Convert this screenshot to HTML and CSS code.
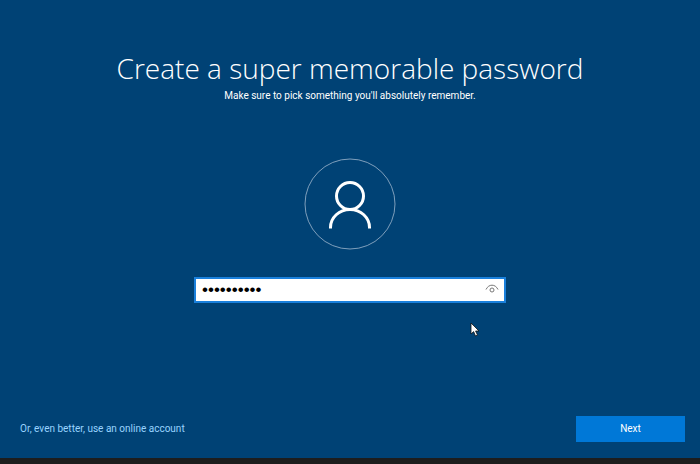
FILE: index.html
```
<!DOCTYPE html>
<html lang="en">
<head>
    <meta charset="UTF-8">
    <meta name="viewport" content="width=device-width, initial-scale=1.0">
    <title>Create a password</title>
    <link rel="stylesheet" href="styles.css">
</head>
<body>
    <form class="setup">
        <header class="heading">
            <h1>Create a super memorable password</h1>
            <p><label for="password">Make sure to pick something you'll absolutely remember.</label></p>
        </header>

        <main class="account">
            <div class="avatar">
                <svg viewBox="0 0 92 92" fill="none" stroke="#fff" aria-hidden="true">
                    <circle cx="46" cy="46" r="45" stroke="#7f9fbc"/>
                    <circle cx="46" cy="38" r="13.5" stroke-width="3"/>
                    <path d="M26.5 70.5v-1a19.5 18 0 0 1 39 0v1" stroke-width="3"/>
                </svg>
            </div>

            <div class="password-box">
                <input type="password" id="password" value="memorable1">
                <button type="button" class="reveal" aria-label="Show password">
                    <svg viewBox="0 0 14 12" fill="none" stroke="#777" aria-hidden="true">
                        <path d="M1 5.500C2.500 2.500 4.600 1.200 7 1.200s4.500 1.300 6 4.300"/>
                        <circle cx="7" cy="6" r="2"/>
                    </svg>
                </button>
            </div>
        </main>

        <footer class="actions">
            <a href="#online">Or, even better, use an online account</a>
            <button type="submit" class="next">Next</button>
        </footer>
    </form>

    <div class="taskbar"></div>

    <svg class="cursor" viewBox="0 0 10 15" aria-hidden="true">
        <path d="M1 1v11l2.600-2.400L5.500 14l2-.9-1.900-4.100H9z" fill="#fff" stroke="#111" stroke-width=".8"/>
    </svg>
</body>
</html>
```
FILE: styles.css
```
* {
    margin: 0;
    padding: 0;
    box-sizing: border-box;
}

body {
    display: flex;
    flex-direction: column;
    min-height: 100vh;
    font-family: Roboto, "Open Sans", sans-serif;
    font-size: 10px;
    line-height: 16px;
    background: #004275;
    color: #fff;
}

.setup {
    flex: 1;
    display: flex;
    flex-direction: column;
    padding: 48px 0 16px;
}

.heading {
    text-align: center;
}

.heading h1 {
    font-family: "Open Sans", "Noto Sans", sans-serif;
    font-size: 28px;
    font-weight: 300;
    line-height: 40px;
}

.account {
    display: flex;
    flex-direction: column;
    align-items: center;
    gap: 27px;
    margin-top: 54px;
}

.avatar svg {
    display: block;
    width: 92px;
    height: 92px;
}

.password-box {
    display: flex;
    align-items: center;
    width: 312px;
    max-width: 100%;
    height: 26px;
    padding: 0 5px 0 6px;
    background: #fff;
    border: 2px solid #1a80dc;
}

.password-box input {
    flex: 1;
    min-width: 0;
    border: none;
    outline: none;
    background: none;
    font-family: "Liberation Sans", Arial, sans-serif;
    font-size: 17px;
    color: #000;
}

.reveal {
    border: none;
    background: none;
    cursor: pointer;
}

.reveal svg {
    display: block;
    width: 14px;
    height: 12px;
}

.actions {
    display: flex;
    justify-content: space-between;
    align-items: center;
    margin-top: auto;
    padding: 0 15px 0 20px;
}

.actions a {
    color: #99d4ff;
    text-decoration: none;
}

.next {
    width: 109px;
    height: 26px;
    border: none;
    background: #0078d7;
    color: #fff;
    font: inherit;
    cursor: pointer;
}

.taskbar {
    height: 6px;
    background: #1d1d1d;
}

/* Mouse pointer floating over the page */
.cursor {
    position: absolute;
    left: 470px;
    top: 322px;
    width: 10px;
    height: 15px;
}
```
